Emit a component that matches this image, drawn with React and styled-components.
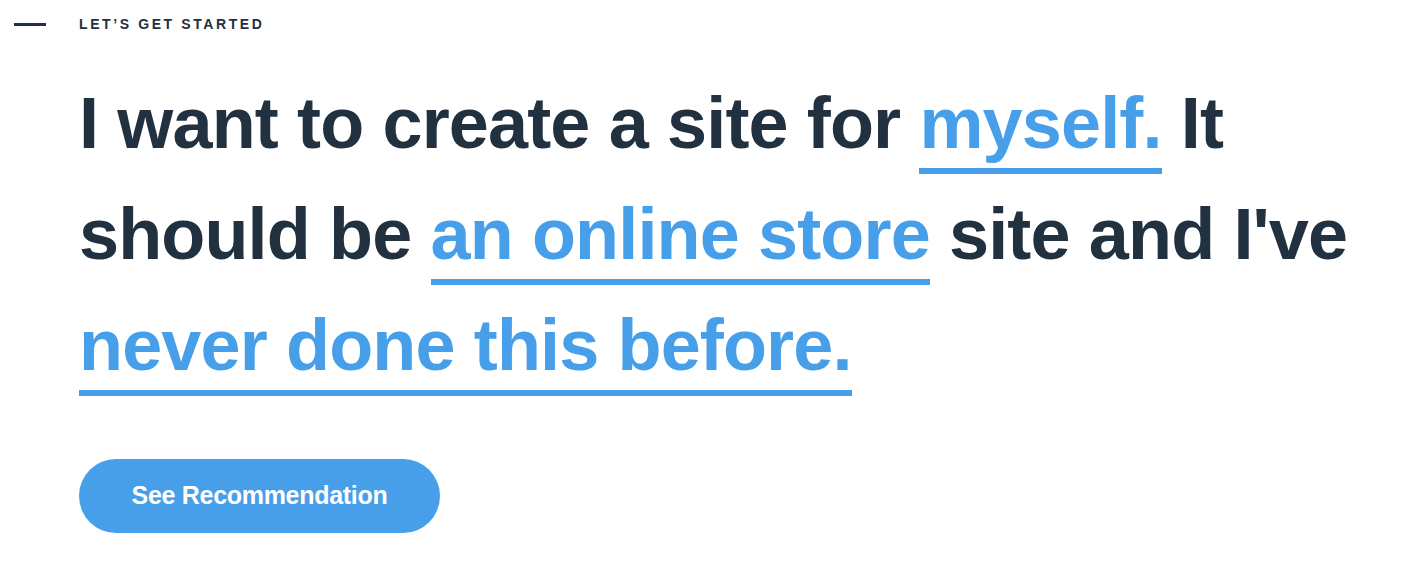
import styled, { createGlobalStyle } from 'styled-components';

const GlobalStyle = createGlobalStyle`
  body {
    margin: 0;
    background: #ffffff;
    font-family: "Liberation Sans", Arial, sans-serif;
    color: #223140;
  }
`;

const Page = styled.main`
  min-height: 573px;
  box-sizing: border-box;
`;

const Eyebrow = styled.header`
  display: flex;
  align-items: center;
  height: 48px;
  padding-left: 14px;
`;

const Dash = styled.span`
  display: block;
  width: 32px;
  height: 3px;
  background: #223140;
  margin-right: 33px;
`;

const EyebrowText = styled.span`
  font-size: 14px;
  font-weight: 700;
  letter-spacing: 2.6px;
  text-transform: uppercase;
`;

const Content = styled.section`
  padding: 20px 20px 0 79px;
`;

const Headline = styled.h1`
  margin: 0;
  font-size: 72px;
  line-height: 111px;
  font-weight: 700;
  letter-spacing: -0.85px;
  color: #223140;
`;

const Choice = styled.span`
  color: #479fea;
  border-bottom: 6px solid #479fea;
  padding-bottom: 5px;
`;

const Button = styled.button`
  margin-top: 58px;
  width: 361px;
  height: 74px;
  border: none;
  border-radius: 37px;
  background: #479fea;
  color: #ffffff;
  font-family: "Liberation Sans", Arial, sans-serif;
  font-size: 25px;
  font-weight: 700;
  letter-spacing: -0.3px;
  padding: 0 0 2px 0;
  cursor: pointer;
`;

export default function App() {
  return (
    <>
      <GlobalStyle />
      <Page>
        <Eyebrow>
          <Dash />
          <EyebrowText>Let’s get started</EyebrowText>
        </Eyebrow>
        <Content>
          <Headline>
            I want to create a site for <Choice>myself.</Choice> It should be{' '}
            <Choice>an online store</Choice> site and I've{' '}
            <Choice>never done this before.</Choice>
          </Headline>
          <Button>See Recommendation</Button>
        </Content>
      </Page>
    </>
  );
}
